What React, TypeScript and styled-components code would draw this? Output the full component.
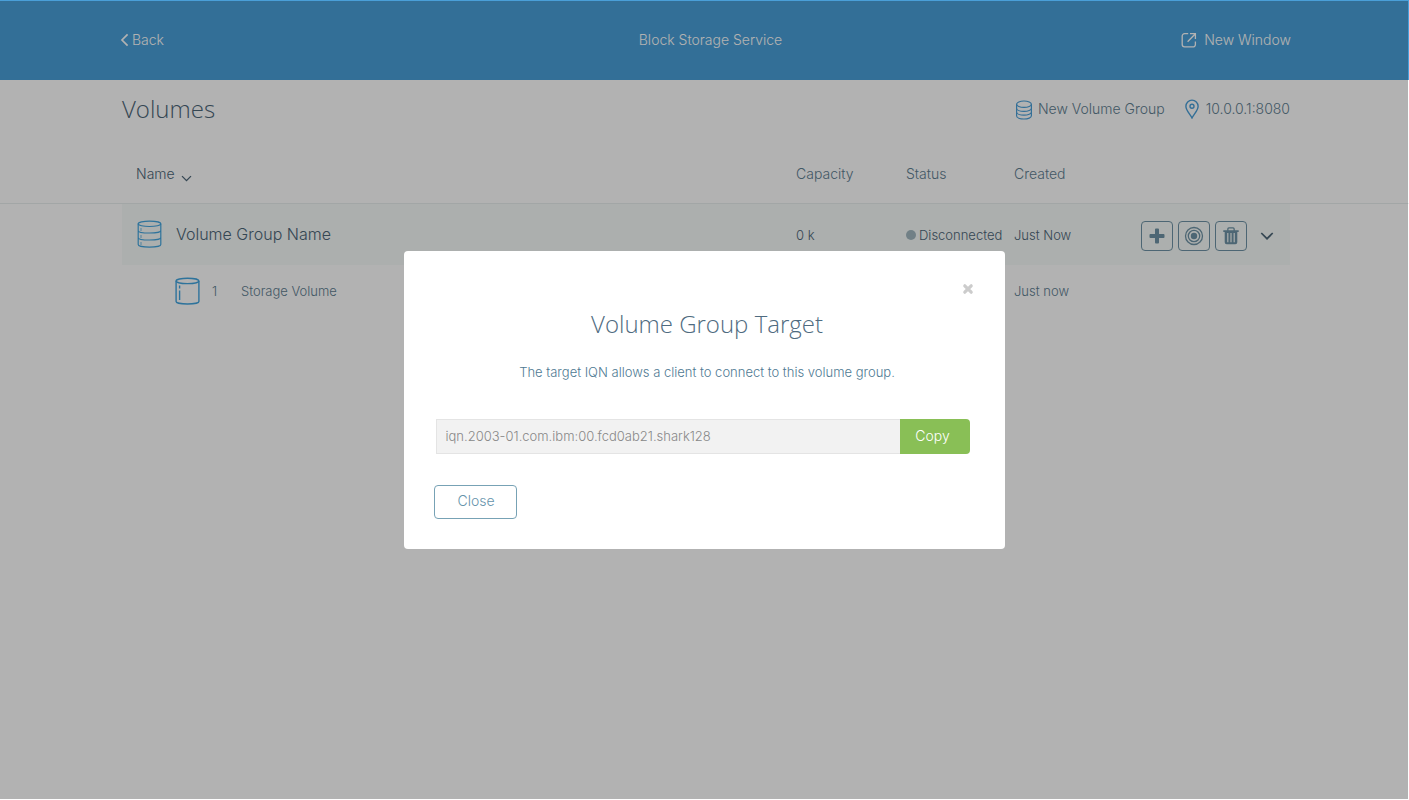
import React from "react";
import styled, { createGlobalStyle } from "styled-components";

const sans = `Inter, "Liberation Sans", sans-serif`;
const display = `"Open Sans", "Noto Sans", sans-serif`;

const color = {
  brand: "#4a9fd8",
  icon: "#4a9fd8",
  ink: "#4d6678",
  body: "#5f8092",
  action: "#6f93a6",
  outline: "#77a2b5",
  rule: "#e9eeee",
  rowTint: "#f7fbf9",
  green: "#89bf56",
};

const GlobalStyle = createGlobalStyle`
  *, *::before, *::after { box-sizing: border-box; }
  body { margin: 0; background: #fff; font-family: ${sans}; font-weight: 300; font-size: 14px; line-height: 20px; color: ${color.body}; }
  button, input { font: inherit; color: inherit; margin: 0; }
  a { color: inherit; text-decoration: none; }
  svg { display: block; flex: none; }
`;

const Page = styled.div`
  min-height: 100vh;
`;

const TopBar = styled.header`
  display: grid;
  grid-template-columns: 1fr auto 1fr;
  align-items: center;
  height: 80px;
  padding: 0 118px 0 120px;
  background: ${color.brand};
  color: #fff;
`;

const ServiceName = styled.span`
  padding-left: 10px;
`;

const IconLink = styled.a<{ $gap: number; $end?: boolean }>`
  display: inline-flex;
  align-items: center;
  gap: ${(p) => p.$gap}px;
  justify-self: ${(p) => (p.$end ? "end" : "start")};
`;

const TitleBar = styled.div`
  display: flex;
  align-items: center;
  justify-content: space-between;
  height: 58px;
  margin-bottom: 6px;
  padding: 0 119px 0 122px;
`;

const PageTitle = styled.h1`
  margin: 0;
  font: 300 24px/32px ${display};
  color: ${color.ink};
`;

const TitleLinks = styled.nav`
  display: flex;
  gap: 20px;
`;

const Table = styled.table`
  width: 100%;
  table-layout: fixed;
  border-collapse: separate;
  border-spacing: 0;
`;

const Col = styled.col<{ $width?: number }>`
  width: ${(p) => (p.$width ? `${p.$width}px` : "auto")};
`;

const HeadCell = styled.th`
  height: 60px;
  padding: 0;
  border-bottom: 1px solid ${color.rule};
  font-weight: inherit;
  text-align: left;
`;

const SortButton = styled.button`
  display: flex;
  align-items: flex-end;
  gap: 6px;
  padding: 0 14px;
  border: 0;
  background: none;
  color: ${color.ink};
`;

const GroupCell = styled.td`
  height: 61px;
  padding: 0;
  background: ${color.rowTint};
  color: ${color.ink};
  font-size: 13px;
`;

const VolumeCell = styled.td`
  height: 52px;
  padding: 0;
  font-size: 13px;
`;

const GroupName = styled.div`
  display: flex;
  align-items: center;
  gap: 14px;
  padding: 0 0 2px 15px;
  font-size: 16px;
`;

const VolumeName = styled.div`
  display: flex;
  align-items: center;
  padding-left: 53px;
`;

const VolumeIndex = styled.span`
  width: 41px;
  padding-left: 12px;
`;

const Status = styled.span`
  display: flex;
  align-items: center;
  gap: 3px;
  white-space: nowrap;
`;

const StatusDot = styled.span`
  width: 10px;
  height: 10px;
  border-radius: 50%;
  background: #a2b8c1;
`;

const Actions = styled.div`
  display: flex;
  align-items: center;
  gap: 5px;
  padding-top: 2px;
`;

const ActionButton = styled.button`
  display: grid;
  place-items: center;
  width: 32px;
  height: 30px;
  padding: 0;
  border: 1px solid ${color.action};
  border-radius: 4px;
  background: none;
  color: ${color.action};
`;

const ToggleButton = styled.button`
  display: grid;
  place-items: center;
  width: 30px;
  height: 30px;
  padding: 0;
  border: 0;
  background: none;
  color: ${color.ink};
`;

const Backdrop = styled.div`
  position: fixed;
  inset: 1px 1px 1px 0;
  display: grid;
  place-items: center;
  background: rgba(0, 0, 0, 0.3);
`;

const Dialog = styled.section`
  display: flex;
  flex-direction: column;
  width: 601px;
  max-width: 100%;
  padding: 30px;
  border-radius: 4px;
  background: #fff;
`;

const DismissButton = styled.button`
  align-self: flex-end;
  display: grid;
  place-items: center;
  width: 14px;
  height: 16px;
  padding: 0;
  border: 0;
  background: none;
  color: #ccc;
`;

const Intro = styled.div`
  padding-left: 6px;
  text-align: center;
`;

const DialogTitle = styled.h2`
  margin: 11px 0 22px;
  font: 300 24px/32px ${display};
  color: #4f6b80;
`;

const DialogText = styled.p`
  margin: 0;
  font-size: 13px;
  color: #4f7a93;
`;

const CopyField = styled.div`
  display: flex;
  height: 35px;
  margin: 37px 5px 31px 2px;
`;

const TargetInput = styled.input`
  flex: 1;
  min-width: 0;
  padding: 0 9px 1px;
  border: 1px solid #e4e4e4;
  border-right: 0;
  border-radius: 0;
  background: #f2f2f2;
  color: #888;
  font-size: 13px;
`;

const CopyButton = styled.button`
  width: 70px;
  padding: 0 4px 2px 0;
  border: 0;
  border-radius: 0 4px 4px 0;
  background: ${color.green};
  color: #fff;
`;

const CloseButton = styled.button`
  align-self: flex-start;
  width: 83px;
  height: 34px;
  padding: 0 0 2px 2px;
  border: 1px solid ${color.outline};
  border-radius: 4px;
  background: #fff;
  color: #6593ab;
`;

const BackIcon = () => (
  <svg width="9" height="14" viewBox="0 0 9 14" fill="none" stroke="currentColor" strokeWidth="1.7" aria-hidden="true">
    <path d="M7.6 1.4 2 7l5.6 5.6" />
  </svg>
);

const NewWindowIcon = () => (
  <svg width="16" height="16" viewBox="0 0 16 16" fill="none" stroke="currentColor" strokeWidth="1.3" aria-hidden="true">
    <path d="M7.2 1.7H3.6a2.4 2.4 0 0 0-2.4 2.4v8.4a2.4 2.4 0 0 0 2.4 2.4H12a2.4 2.4 0 0 0 2.4-2.4V9.4M9 1.7h5.4V7M14.4 1.7 6.6 9.8" />
  </svg>
);

const StackIcon = () => (
  <svg width="18" height="24" viewBox="0 -3 18 24" fill="none" stroke={color.icon} strokeWidth="1.2" aria-hidden="true">
    <ellipse cx="9" cy="4.2" rx="7.4" ry="3.2" />
    <path d="M1.6 4.2v4c0 1.8 3.3 3.2 7.4 3.2s7.4-1.4 7.4-3.2v-4M1.6 8.2V12c0 1.8 3.3 3.2 7.4 3.2s7.4-1.4 7.4-3.2V8.2M1.6 12v3.8c0 1.8 3.3 3.2 7.4 3.2s7.4-1.4 7.4-3.2V12" />
  </svg>
);

const PinIcon = () => (
  <svg width="16" height="20" viewBox="0 0 16 20" fill="none" stroke={color.icon} strokeWidth="1.4" aria-hidden="true">
    <path d="M7 19C5.400 15.500.9 11.500.9 7.200a6.100 6.100 0 0 1 12.200 0C13.100 11.500 8.600 15.500 7 19z" />
    <circle cx="7" cy="7.200" r="2" />
  </svg>
);

const ChevronIcon = ({ size }: { size: number }) => (
  <svg width={size} height={size} viewBox="0 1 14 14" fill="none" stroke="currentColor" strokeWidth="1.7" aria-hidden="true">
    <path d="M1.300 5 7 10.700l5.700-5.700" />
  </svg>
);

const VolumeGroupIcon = () => (
  <svg width="25" height="28" viewBox="0 0 25 28" fill="none" stroke="#43a5df" strokeWidth="1.2" aria-hidden="true">
    <ellipse cx="12.500" cy="3.800" rx="11.300" ry="2.700" />
    <path d="M1.200 3.800v20.600c0 1.500 5 2.700 11.300 2.700s11.300-1.200 11.300-2.700V3.800M1.200 10.400c0 1.500 5 2.600 11.300 2.600s11.300-1.100 11.300-2.600M1.200 17.400c0 1.500 5 2.600 11.300 2.600s11.300-1.100 11.300-2.600" />
    <path d="M4 8v3M4 15v3M4 22v3" strokeOpacity=".6" />
  </svg>
);

const VolumeIcon = () => (
  <svg width="25" height="28" viewBox="0 0 25 28" fill="none" stroke="#43a5df" strokeWidth="1.4" aria-hidden="true">
    <ellipse cx="12.500" cy="3.900" rx="11.400" ry="2.700" />
    <path d="M1.100 3.900v20.600c0 1.400 5 2.500 11.400 2.500s11.400-1.100 11.400-2.500V3.900M4.600 8.500v3M4.600 13.500V23" />
  </svg>
);

const PlusIcon = () => (
  <svg width="16" height="16" viewBox="0 0 16 16" fill="currentColor" aria-hidden="true">
    <path d="M6.9.5h2.200a.9.9 0 0 1 .9.9V6h4.600a.9.9 0 0 1 .9.9v2.200a.9.9 0 0 1-.9.9H10v4.600a.9.9 0 0 1-.9.9H6.900a.9.9 0 0 1-.9-.9V10H1.400a.9.9 0 0 1-.9-.9V6.900A.9.9 0 0 1 1.400 6H6V1.400A.9.9 0 0 1 6.900.5z" />
  </svg>
);

const TargetIcon = () => (
  <svg width="20" height="20" viewBox="0 0 20 20" fill="none" stroke="currentColor" strokeWidth="1.3" aria-hidden="true">
    <circle cx="10" cy="10" r="8.500" />
    <circle cx="10" cy="10" r="5.700" />
    <circle cx="10" cy="10" r="3.200" fill="currentColor" stroke="none" />
  </svg>
);

const TrashIcon = () => (
  <svg width="16" height="18" viewBox="0 0 16 18" fill="currentColor" fillRule="evenodd" aria-hidden="true">
    <path d="M.3 3.300h3.900V2A1.700 1.700 0 0 1 5.900.3h4.200A1.700 1.700 0 0 1 11.800 2v1.300h3.900V5H14.300v10.200a2 2 0 0 1-2 2H3.700a2 2 0 0 1-2-2V5H.3zM5.500 3.300h5V2a.4.4 0 0 0-.4-.4H5.900a.4.4 0 0 0-.4.4zM4.200 6v9.200h1.200V6zM7.400 6v9.200h1.200V6zM10.600 6v9.200h1.200V6z" />
  </svg>
);

const CrossIcon = () => (
  <svg width="12" height="12" viewBox="0 0 12 12" stroke="currentColor" strokeWidth="3.2" strokeLinecap="round" aria-hidden="true">
    <path d="m2.800 2.800 6.400 6.400M9.200 2.800 2.800 9.200" />
  </svg>
);

export default function App() {
  return (
    <>
      <GlobalStyle />
      <Page>
        <TopBar>
          <IconLink href="#back" $gap={3}>
            <BackIcon />
            Back
          </IconLink>
          <ServiceName>Block Storage Service</ServiceName>
          <IconLink href="#new-window" $gap={7} $end>
            <NewWindowIcon />
            New Window
          </IconLink>
        </TopBar>

        <main>
          <TitleBar>
            <PageTitle>Volumes</PageTitle>
            <TitleLinks>
              <IconLink href="#new-group" $gap={5}>
                <StackIcon />
                New Volume Group
              </IconLink>
              <IconLink href="#host" $gap={5}>
                <PinIcon />
                10.0.0.1:8080
              </IconLink>
            </TitleLinks>
          </TitleBar>

          <Table>
            <colgroup>
              <Col $width={122} />
              <Col />
              <Col $width={110} />
              <Col $width={108} />
              <Col $width={127} />
              <Col $width={149} />
              <Col $width={119} />
            </colgroup>
            <thead>
              <tr>
                <HeadCell as="td" />
                <HeadCell scope="col">
                  <SortButton type="button">
                    Name
                    <ChevronIcon size={11} />
                  </SortButton>
                </HeadCell>
                <HeadCell scope="col">Capacity</HeadCell>
                <HeadCell scope="col">Status</HeadCell>
                <HeadCell scope="col">Created</HeadCell>
                <HeadCell as="td" />
                <HeadCell as="td" />
              </tr>
            </thead>
            <tbody>
              <tr>
                <td />
                <GroupCell>
                  <GroupName>
                    <VolumeGroupIcon />
                    Volume Group Name
                  </GroupName>
                </GroupCell>
                <GroupCell>0 k</GroupCell>
                <GroupCell>
                  <Status>
                    <StatusDot />
                    Disconnected
                  </Status>
                </GroupCell>
                <GroupCell>Just Now</GroupCell>
                <GroupCell>
                  <Actions>
                    <ActionButton type="button" aria-label="Add volume">
                      <PlusIcon />
                    </ActionButton>
                    <ActionButton type="button" aria-label="Show target">
                      <TargetIcon />
                    </ActionButton>
                    <ActionButton type="button" aria-label="Delete group">
                      <TrashIcon />
                    </ActionButton>
                    <ToggleButton type="button" aria-label="Collapse group" aria-expanded="true">
                      <ChevronIcon size={14} />
                    </ToggleButton>
                  </Actions>
                </GroupCell>
                <td />
              </tr>
              <tr>
                <td />
                <VolumeCell>
                  <VolumeName>
                    <VolumeIcon />
                    <VolumeIndex>1</VolumeIndex>
                    Storage Volume
                  </VolumeName>
                </VolumeCell>
                <td />
                <td />
                <VolumeCell>Just now</VolumeCell>
                <td />
                <td />
              </tr>
            </tbody>
          </Table>
        </main>
      </Page>

      <Backdrop>
        <Dialog role="dialog" aria-modal="true" aria-labelledby="target-title">
          <DismissButton type="button" aria-label="Dismiss">
            <CrossIcon />
          </DismissButton>
          <Intro>
            <DialogTitle id="target-title">Volume Group Target</DialogTitle>
            <DialogText id="target-text">The target IQN allows a client to connect to this volume group.</DialogText>
          </Intro>
          <CopyField>
            <TargetInput
              type="text"
              readOnly
              aria-label="Target IQN"
              aria-describedby="target-text"
              value="iqn.2003-01.com.ibm:00.fcd0ab21.shark128"
            />
            <CopyButton type="button">Copy</CopyButton>
          </CopyField>
          <CloseButton type="button">Close</CloseButton>
        </Dialog>
      </Backdrop>
    </>
  );
}
